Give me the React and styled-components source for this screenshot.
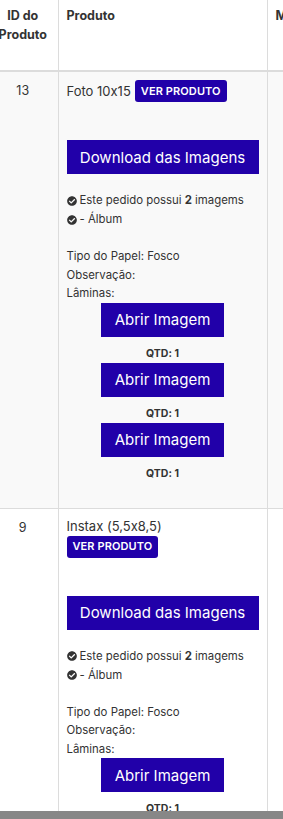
import React from 'react';
import styled, { createGlobalStyle } from 'styled-components';
import { FaCheckCircle } from 'react-icons/fa';

const GlobalStyle = createGlobalStyle`
  html, body {
    margin: 0;
    padding: 0;
    background: #fff;
    font-family: Inter, "Noto Sans", sans-serif;
    font-feature-settings: "calt" 0;
    color: #333;
  }
`;

const Viewport = styled.div`
  height: 811px;
  overflow: hidden;
`;

const ScrollBar = styled.div`
  height: 8px;
  background: #878787;
`;

const Table = styled.table`
  border-collapse: collapse;
  margin-left: -12px;
  width: 600px;
  table-layout: fixed;
`;

const Th = styled.th`
  width: ${p => p.$w}px;
  height: 71px;
  box-sizing: border-box;
  padding: 6px 8px;
  vertical-align: top;
  text-align: ${p => (p.$center ? 'center' : 'left')};
  font-size: 12.5px;
  font-weight: 700;
  line-height: 19px;
  color: #333;
  border-left: 1px solid #dcdcdc;
  border-bottom: 2px solid #dcdcdc;
  &:first-child {
    border-left: none;
  }
`;

const Tr = styled.tr`
  background: ${p => (p.$striped ? '#f9f9f9' : '#fff')};
`;

const Td = styled.td`
  padding: ${p => (p.$center ? '9px 8px 25px' : '8px 8px 25px')};
  vertical-align: top;
  text-align: ${p => (p.$center ? 'center' : 'left')};
  font-size: 12.5px;
  line-height: 19px;
  border-left: 1px solid #dcdcdc;
  border-bottom: 1px solid #dcdcdc;
  &:first-child {
    border-left: none;
  }
`;

const Cell = styled.div`
  display: flex;
  flex-direction: column;
`;

const TitleLine = styled.div`
  display: flex;
  flex-wrap: wrap;
  flex-direction: ${p => (p.$stacked ? 'column' : 'row')};
  align-items: ${p => (p.$stacked ? 'flex-start' : 'center')};
  column-gap: 4px;
  font-size: 13px;
  line-height: 19px;
  color: #333;
`;

const Badge = styled.span`
  display: inline-flex;
  align-items: center;
  justify-content: center;
  height: 22px;
  padding: 0 6px;
  border-radius: 3px;
  background: #2100a9;
  color: #fff;
  font-size: 11px;
  font-weight: 600;
  letter-spacing: 0.1px;
`;

const DownloadButton = styled.button`
  margin-top: 38px;
  height: 34px;
  width: 100%;
  border: none;
  background: #2100a9;
  color: #fff;
  font-family: inherit;
  font-feature-settings: "calt" 0;
  font-size: 15px;
  padding: 0;
`;

const CheckList = styled.div`
  margin-top: 17px;
  font-size: 11.4px;
  line-height: 19px;
`;

const CheckLine = styled.div`
  display: flex;
  align-items: center;
  gap: 3px;
  svg {
    width: 10px;
    height: 10px;
    color: #333;
  }
  b {
    font-weight: 700;
  }
`;

const InfoList = styled.div`
  margin-top: 18px;
  font-size: 11.4px;
  line-height: 18.5px;
`;

const ImageItem = styled.div`
  display: flex;
  flex-direction: column;
  align-items: center;
`;

const OpenButton = styled.button`
  height: 34px;
  width: 123px;
  border: none;
  background: #2100a9;
  color: #fff;
  font-family: inherit;
  font-size: 15px;
  padding: 0;
`;

const Qtd = styled.div`
  margin-top: 9px;
  margin-bottom: 1px;
  font-size: 10.5px;
  font-weight: 700;
  line-height: 16px;
`;

const orders = [
  { id: 13, name: 'Foto 10x15', stacked: false, images: 3, striped: true },
  { id: 9, name: 'Instax (5,5x8,5)', stacked: true, images: 3, striped: false },
];

const ProductCell = ({ order }) => (
  <Cell>
    <TitleLine $stacked={order.stacked}>
      <span>{order.name}</span>
      <Badge>VER PRODUTO</Badge>
    </TitleLine>
    <DownloadButton>Download das Imagens</DownloadButton>
    <CheckList>
      <CheckLine>
        <FaCheckCircle />
        <span>Este pedido possui <b>2</b> imagems</span>
      </CheckLine>
      <CheckLine>
        <FaCheckCircle />
        <span>- Álbum</span>
      </CheckLine>
    </CheckList>
    <InfoList>
      <div>Tipo do Papel: Fosco</div>
      <div>Observação:</div>
      <div>Lâminas:</div>
    </InfoList>
    {Array.from({ length: order.images }).map((_, i) => (
      <ImageItem key={i}>
        <OpenButton>Abrir Imagem</OpenButton>
        <Qtd>QTD: 1</Qtd>
      </ImageItem>
    ))}
  </Cell>
);

const App = () => (
  <>
    <GlobalStyle />
    <Viewport>
      <Table>
        <thead>
          <tr>
            <Th $w={70} $center>ID do Produto</Th>
            <Th $w={209}>Produto</Th>
            <Th $w={321}>Mais</Th>
          </tr>
        </thead>
        <tbody>
          {orders.map(order => (
            <Tr key={order.id} $striped={order.striped}>
              <Td $center>{order.id}</Td>
              <Td>
                <ProductCell order={order} />
              </Td>
              <Td />
            </Tr>
          ))}
        </tbody>
      </Table>
    </Viewport>
    <ScrollBar />
  </>
);

export default App;
